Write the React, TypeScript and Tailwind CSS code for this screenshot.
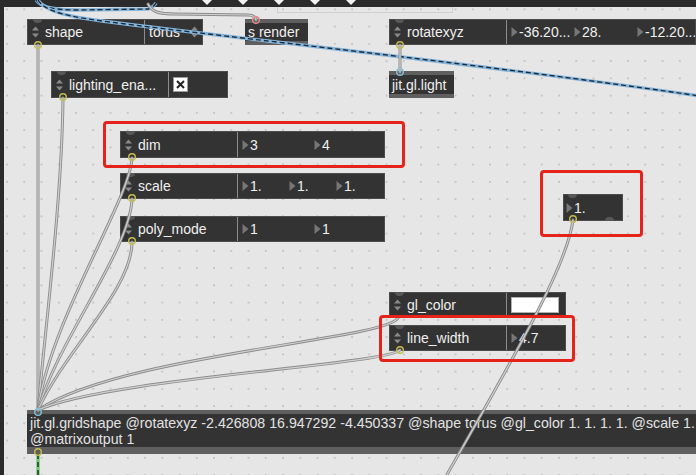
import React from "react";

const FONT = "font-['Liberation_Sans',Arial,sans-serif]";

function Arrows() {
  return (
    <svg width="9" height="20" viewBox="0 0 9 20" className="shrink-0">
      <path d="M1 8.5 L4.5 4.5 L8 8.5 Z" fill="#8a8a8a" />
      <path d="M1 11.5 L4.5 15.5 L8 11.5 Z" fill="#8a8a8a" />
    </svg>
  );
}

function Tri() {
  return (
    <svg width="7" height="12" viewBox="0 0 7 12" className="shrink-0 mr-[1px]">
      <path d="M0.5 1 L6.5 6 L0.5 11 Z" fill="#767676" />
    </svg>
  );
}

function Num({ v, w }: { v: string; w: string }) {
  return (
    <div className={`flex items-center shrink-0 ${w}`}>
      <Tri />
      <span className="whitespace-nowrap">{v}</span>
    </div>
  );
}

function Attrui({ pos, label, children }: { pos: string; label: string; children: React.ReactNode }) {
  return (
    <div className={`absolute ${pos} flex bg-[#333] border border-[#4c4c4c] text-[14px] text-[#f0f0f0] leading-none`}>
      <div className="relative flex items-center w-[117px] shrink-0 border-r border-[#8d8d8d] pl-[3px]">
        <span className="absolute top-[-1px] left-[5px] w-[9px] h-[4px] rounded-b-full bg-[#575757]" />
        <Arrows />
        <span className="ml-[5px] whitespace-nowrap">{label}</span>
      </div>
      <div className="flex flex-1 items-center pl-[4px] min-w-0 overflow-hidden">{children}</div>
    </div>
  );
}

function Obj({ pos, children }: { pos: string; children: React.ReactNode }) {
  return (
    <div className={`absolute ${pos} flex items-center bg-[#333] border-t-[4px] border-b-[4px] border-[#5f5f5f] text-[14px] text-[#f0f0f0] leading-none px-[3px] whitespace-nowrap`}>
      {children}
    </div>
  );
}

function Cord({ d }: { d: string }) {
  return (
    <g fill="none" strokeLinecap="round">
      <path d={d} stroke="#8c8c8c" strokeWidth="3" />
      <path d={d} stroke="#d0d0d0" strokeWidth="1.2" />
    </g>
  );
}

function Matrix({ d }: { d: string }) {
  return (
    <g fill="none">
      <path d={d} stroke="#86b6dc" strokeWidth="3.4" />
      <path d={d} stroke="#1e2c3a" strokeWidth="1.4" strokeDasharray="5 3" />
    </g>
  );
}

function Ring({ x, y, c }: { x: number; y: number; c: string }) {
  return <circle cx={x} cy={y} r="3.3" fill="none" stroke={c} strokeWidth="1.4" />;
}

export default function App() {
  const yellow = "#c4bc4e";
  const blue = "#86c0d8";
  return (
    <div className={`relative w-[696px] h-[475px] overflow-hidden bg-[#2b2b2b] ${FONT}`}>
      <div className="absolute left-[4px] top-[7px] right-0 bottom-0 bg-[#e6e6e6] bg-[radial-gradient(circle,#b4b4b4_0.5px,transparent_1px)] bg-[length:17.25px_17.25px] bg-[position:-5.6px_-6.3px]" />

      <div className="absolute left-[277px] top-[-2px] w-[176px] h-[15px] border border-[#cfcfcf]" />

      <div className="absolute top-0 left-0 right-0 h-[7px] bg-[#2b2b2b]">
        {["left-[202px]", "left-[238px]", "left-[274px]", "left-[310px]", "left-[346px]"].map((p) => (
          <svg key={p} width="10" height="5" viewBox="0 0 10 5" className={`absolute top-0 ${p}`}>
            <path d="M0 0 L10 0 L5 5 Z" fill="#f2f2f2" />
          </svg>
        ))}
      </div>

      <Attrui pos="left-[27px] top-[19px] w-[176px] h-[26px]" label="shape">
        <span>torus</span>
        <span className="ml-auto mr-[3px]">
          <Arrows />
        </span>
      </Attrui>

      <Obj pos="left-[245px] top-[19px] w-[63px] h-[26px]">s render</Obj>

      <Attrui pos="left-[389px] top-[19px] w-[307px] h-[26px]" label="rotatexyz">
        <Num v="-36.20..." w="w-[63px]" />
        <Num v="28." w="w-[63px]" />
        <Num v="-12.20..." w="w-[63px]" />
      </Attrui>

      <Attrui pos="left-[51px] top-[71px] w-[177px] h-[27px]" label="lighting_ena...">
        <div className="w-[15px] h-[15px] bg-white border border-[#9a9a9a] flex items-center justify-center">
          <svg width="9" height="9" viewBox="0 0 9 9">
            <path d="M1 1 L8 8 M8 1 L1 8" stroke="#222" strokeWidth="2" />
          </svg>
        </div>
      </Attrui>

      <Obj pos="left-[389px] top-[71px] w-[65px] h-[27px]">jit.gl.light</Obj>

      <Attrui pos="left-[120px] top-[131px] w-[265px] h-[27px]" label="dim">
        <Num v="3" w="w-[72px]" />
        <Num v="4" w="w-[72px]" />
      </Attrui>

      <Attrui pos="left-[120px] top-[173px] w-[265px] h-[26px]" label="scale">
        <Num v="1." w="w-[47px]" />
        <Num v="1." w="w-[47px]" />
        <Num v="1." w="w-[47px]" />
      </Attrui>

      <Attrui pos="left-[120px] top-[216px] w-[265px] h-[26px]" label="poly_mode">
        <Num v="1" w="w-[72px]" />
        <Num v="1" w="w-[72px]" />
      </Attrui>

      <div className="absolute left-[563px] top-[194px] w-[60px] h-[27px] flex items-center bg-[#333] border border-[#4c4c4c] text-[14px] text-[#f0f0f0] leading-none pl-[2px]">
        <span className="absolute top-[-1px] left-[4px] w-[9px] h-[4px] rounded-b-full bg-[#575757]" />
        <span className="absolute bottom-[-1px] right-[8px] w-[9px] h-[4px] rounded-t-full bg-[#575757]" />
        <Num v="1." w="w-[40px]" />
      </div>

      <Attrui pos="left-[389px] top-[292px] w-[177px] h-[26px]" label="gl_color">
        <div className="w-[48px] h-[16px] bg-white border border-[#b0b0b0]" />
      </Attrui>

      <Attrui pos="left-[389px] top-[325px] w-[177px] h-[26px]" label="line_width">
        <Num v="4.7" w="w-[50px]" />
      </Attrui>

      <div className="absolute left-[27px] top-[410px] w-[680px] h-[44px] bg-[#333] border-t-[4px] border-b-[7px] border-[#5f5f5f] text-[14.2px] text-[#e2e2e2] leading-[16px] pl-[3px] pt-[1px]">
        <div className="whitespace-nowrap">
          jit.gl.gridshape @rotatexyz -2.426808 16.947292 -4.450337 @shape torus @gl_color 1. 1. 1. 1. @scale 1.
        </div>
        <div className="whitespace-nowrap">@matrixoutput 1</div>
      </div>

      <svg width="696" height="475" viewBox="0 0 696 475" className="absolute inset-0 pointer-events-none">
        <Matrix d="M36 0 C42 8 55 10 80 10 L148 9 C152 8 154 6 156 3" />
        <Matrix d="M38 0 C45 12 70 17 110 22 C250 40 450 60 700 96" />
        <Cord d="M148 4 C152 12 158 14 176 14 L248 15 C254 15 256 18 256 20" />
        <Cord d="M38 45 L38 410" />
        <Cord d="M63 98 C62 200 45 330 38 410" />
        <Cord d="M132 158 C130 200 50 320 38 410" />
        <Cord d="M132 199 C130 250 58 340 38 410" />
        <Cord d="M132 242 C132 290 65 350 38 410" />
        <Cord d="M398 318 C385 340 120 355 38 410" />
        <Cord d="M400 350 C385 365 110 378 38 410" />
        <Cord d="M400 45 L400 72" />
        <Cord d="M573 220 C568 260 530 330 445 478" />
        <g fill="none">
          <path d="M38 454 L38 480" stroke="#73c873" strokeWidth="3.4" />
          <path d="M38 454 L38 480" stroke="#1c2a1c" strokeWidth="1.4" strokeDasharray="5 3" />
        </g>
        <Ring x={38} y={45} c={yellow} />
        <Ring x={63} y={97} c={yellow} />
        <Ring x={132} y={157} c={yellow} />
        <Ring x={132} y={198} c={yellow} />
        <Ring x={132} y={241} c={yellow} />
        <Ring x={400} y={45} c={yellow} />
        <Ring x={400} y={350} c={yellow} />
        <Ring x={573} y={219} c={yellow} />
        <Ring x={38} y={452} c={yellow} />
        <Ring x={400} y={72} c={blue} />
        <Ring x={38} y={412} c={blue} />
        <Ring x={256} y={20} c="#e08a8a" />
      </svg>

      <div className="absolute left-[103px] top-[121px] w-[302px] h-[47px] border-[3px] border-[#e5231b] rounded-[4px]" />
      <div className="absolute left-[540px] top-[170px] w-[103px] h-[67px] border-[3px] border-[#e5231b] rounded-[4px]" />
      <div className="absolute left-[379px] top-[315px] w-[196px] h-[47px] border-[3px] border-[#e5231b] rounded-[4px]" />
    </div>
  );
}
